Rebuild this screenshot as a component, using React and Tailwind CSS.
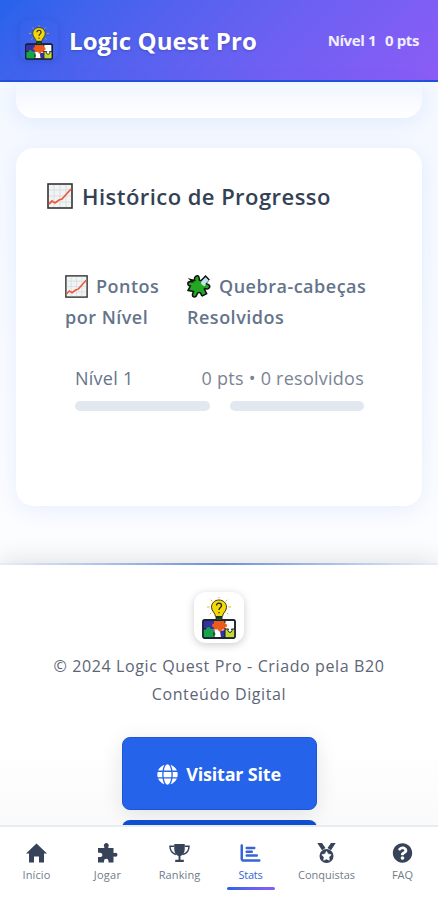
import { FaGlobe, FaQuestionCircle } from 'react-icons/fa'
import { FaChartBar } from 'react-icons/fa6'

/** Light bulb standing on a row of puzzle pieces. */
const Logo = ({ className }) => (
  <svg className={className} viewBox="0 0 34 42" fill="none">
    {/* Rays */}
    <path
      d="M17 0v1M9 3l1 1M25 3l-1 1M5.500 10h1.500M28.500 10H27M8 17l1-1M26 17l-1-1"
      stroke="#eab308" strokeWidth="1" strokeLinecap="round"
    />
    {/* Pieces */}
    <rect x="1" y="23" width="32" height="18" rx="1.500" fill="#fff" stroke="#111827" strokeWidth="1.500" />
    <path d="M1.500 23.500h11v9h-11z" fill="#3730a3" />
    <path d="M1.500 32h3a2 2 0 1 1 4 0h3v3a2 2 0 1 1 0 4v1.500h-10z" fill="#16a34a" />
    <path d="M18 34l5-1v7.500h-4z" fill="#3730a3" />
    <path d="M23 32h3.500a2 2 0 1 0 3 0h3v8.500H23z" fill="#c4d92e" />
    <path d="M12 23.500h11v3a2 2 0 1 1 0 4v2h-3a2 2 0 1 1-4 0h-4v-2a2 2 0 1 1 0-4z" fill="#ea5b1c" />
    <path d="M12 33v8M23 23v3M23 31v10M23 32h3.500a2 2 0 1 0 3 0H33M1 32h3" stroke="#111827" strokeWidth="1" />
    <rect x="1" y="23" width="32" height="18" rx="1.500" stroke="#111827" strokeWidth="1.300" />
    {/* Bulb */}
    <path
      d="M17 3c-4.300 0-7.500 3.200-7.500 7.200 0 4.200 4 5.800 4 9.300h7c0-3.500 4-5.100 4-9.300C24.500 6.200 21.300 3 17 3z"
      fill="#f2d90c" stroke="#3f3a12" strokeWidth="1"
    />
    <path d="M14 20h6v3.500h-6z" fill="#14532d" stroke="#111827" strokeWidth=".8" />
    <path d="M14.500 8.500c0-3.200 5-3 5 0 0 2-2.500 2-2.500 4.500M17 15v1.300" stroke="#292524" strokeWidth="1.300" />
  </svg>
)

const ChartIcon = ({ className }) => (
  <svg className={className} viewBox="0 0 26 26" fill="none">
    <rect x="1" y="1" width="24" height="24" fill="#f1f3f4" stroke="#333" strokeWidth="1.600" />
    <path d="M7 2v22M13 2v22M19 2v22M2 7h22M2 13h22M2 19h22" stroke="#d5dadd" strokeWidth=".8" />
    <path d="M2 21l3-3 3 2 4-3 3-1 9-10" stroke="#ef5a3c" strokeWidth="1.800" />
  </svg>
)

const GreenPiece = ({ className }) => (
  <svg className={className} viewBox="0 0 22 22">
    <path
      d="M3 5l4 1C6 2 10 0 11 3c1 2-1 3 2 3l4-4 3 3-3 4c3 0 5 2 3 4s-4-1-4 1l2 4-4 2c-2-1 0-3-3-3s-1 4-4 4-2-3-1-5l-5-1 2-4c-3 0-3-4 0-4h2z"
      fill="#22a722" stroke="#111" strokeWidth="1.400"
    />
    <path d="M13 7l4-4 3 3-3 3c1 2-2 3-4 0z" fill="#bfe3ee" />
  </svg>
)

const HomeIcon = ({ className }) => (
  <svg className={className} viewBox="0 0 20 20" fill="currentColor">
    <path d="M10 .5L20.500 10.500H17.500V19.500H12.500V13.500H7.500V19.500H2.500V10.500H-.5z" />
  </svg>
)

const PieceIcon = ({ className }) => (
  <svg className={className} viewBox="0 0 20 20" fill="currentColor">
    <path d="M.5 5H6.800V3.800A2.400 2.400 0 1 1 10.800 3.800V5H16V10H17A2 2 0 1 1 17 13.500H16V19.500H11V18A2.200 2.200 0 1 0 6.500 18V19.500H.5V14H2A2.200 2.200 0 1 0 2 9.800H.5z" />
  </svg>
)

const TrophyIcon = ({ className }) => (
  <svg className={className} viewBox="0 0 22 20" fill="none">
    <path d="M5.500.5h11V6c0 4-2.200 6.500-4.500 7.200V17h3.500v2.500h-9V17H10v-3.800C7.700 12.500 5.500 10 5.500 6z" fill="currentColor" />
    <path d="M5.500 3H1c0 5 2.500 7.500 6.500 8.500M16.500 3H21c0 5-2.500 7.500-6.500 8.500" stroke="currentColor" strokeWidth="1.500" />
  </svg>
)

const MedalIcon = ({ className }) => (
  <svg className={className} viewBox="0 0 20 20" fill="none">
    <path d="M.8 0H5.500L9 5 5.500 7.200zM19.200 0H14.500L11 5l3.500 2.200z" fill="currentColor" />
    <circle cx="10" cy="13" r="7" fill="currentColor" />
    <path d="M10 8.300l1.500 2.700 3.200.7-2.200 2.400.3 3.200-2.800-1.300-2.800 1.300.3-3.200-2.200-2.400 3.200-.7z" fill="#fff" stroke="#fff" strokeWidth=".6" />
  </svg>
)

const NAV = [
  { label: 'Início', icon: HomeIcon, width: 'w-[73px]', text: 'tracking-[0.1px]' },
  { label: 'Jogar', icon: PieceIcon, width: 'w-[69px]', text: 'tracking-[0.3px]' },
  { label: 'Ranking', icon: TrophyIcon, width: 'w-[75px]', text: 'tracking-[0.1px]' },
  { label: 'Stats', icon: FaChartBar, width: 'w-[67px]', text: 'tracking-[-0.2px]', active: true },
  { label: 'Conquistas', icon: MedalIcon, width: 'w-[85px]', text: '' },
  { label: 'FAQ', icon: FaQuestionCircle, width: 'w-[67px]', text: '' },
]

const Header = () => (
  <header className="flex h-[82px] shrink-0 items-center border-b-2 border-[#2450d8] bg-linear-135 from-[#2563eb] to-[#8b5cf6] pl-5 pr-[19px] text-white">
    <div className="flex h-[40px] w-[38px] items-center justify-center rounded-lg pt-1 shadow-[0_2px_7px_rgba(30,50,150,0.25)]">
      <Logo className="h-[35px] w-[28px]" />
    </div>
    <h1 className="ml-[11px] mt-[2px] whitespace-nowrap text-[24px] font-bold tracking-[0.1px] [text-shadow:0_1px_3px_rgba(0,0,0,0.2)]">Logic Quest Pro</h1>
    <div className="ml-auto flex gap-[9px] whitespace-nowrap text-[15px] font-bold tracking-[-0.4px] text-[#f1effe]">
      <span>Nível 1</span>
      <span>0 pts</span>
    </div>
  </header>
)

const ProgressCard = () => (
  <section className="mt-[30px] h-[358px] rounded-[18px] bg-white px-[31px] pt-[30px] shadow-[0_4px_22px_rgba(37,99,235,0.09)]">
    <h2 className="flex h-[36px] items-center whitespace-nowrap text-[22px] font-semibold text-[#334155]">
      <ChartIcon className="mr-[9px] size-[26px]" />
      <span className="tracking-[0.45px]">Histórico de Progresso</span>
    </h2>
    <div className="mt-[57px] flex pl-[18px] text-[18px] font-semibold leading-[30.500px] tracking-[0.5px] text-[#64748b]">
      <h3 className="w-[122px] whitespace-nowrap">
        <span className="flex items-center">
          <ChartIcon className="mr-2 size-[23px]" />
          Pontos
        </span>
        por Nível
      </h3>
      <h3 className="whitespace-nowrap">
        <span className="flex items-center">
          <GreenPiece className="mr-2 size-6" />
          Quebra-cabeças
        </span>
        Resolvidos
      </h3>
    </div>
    <div className="mt-[32px] pl-7 pr-[27px]">
      <div className="flex h-[28px] items-center justify-between whitespace-nowrap text-[18px] tracking-[0.25px] text-[#7b8494]">
        <span className="font-medium text-[#64748b]">Nível 1</span>
        <span>0 pts • 0 resolvidos</span>
      </div>
      <div className="mt-[9px] flex gap-5">
        <div className="h-[10px] flex-1 rounded-full bg-[#e2e8f0]" />
        <div className="h-[10px] flex-1 rounded-full bg-[#e2e8f0]" />
      </div>
    </div>
  </section>
)

const Footer = () => (
  <footer className="flex h-[262px] shrink-0 flex-col items-center overflow-hidden bg-linear-to-b from-white from-70% to-[#fafafb] shadow-[0_-4px_22px_rgba(0,0,0,0.1)]">
    <div className="h-[2px] w-full shrink-0 bg-linear-to-r from-[#e8edf8] via-[#6d8fd8] to-[#e8edf8]" />
    <div className="mt-[27px] flex h-[51px] w-[50px] shrink-0 items-center justify-center rounded-xl bg-white shadow-[0_2px_9px_rgba(0,0,0,0.2)]">
      <Logo className="h-[42px] w-[34px]" />
    </div>
    <p className="mt-[9px] shrink-0 whitespace-nowrap text-center text-[16px] font-medium leading-[28px] tracking-[0.62px] text-[#5c6575]">
      © 2024 Logic Quest Pro - Criado pela B20
      <br />
      Conteúdo Digital
    </p>
    <a className="mt-[29px] flex h-[73px] w-[195px] shrink-0 items-center justify-center gap-[8px] rounded-lg border border-[#1d55d4] bg-[#2563eb] pt-[2px] text-[18px] font-bold tracking-[-0.2px] text-white shadow-[0_4px_22px_rgba(0,0,0,0.1)]">
      <FaGlobe className="size-[21px]" />
      <span className="whitespace-nowrap">Visitar Site</span>
    </a>
    <div className="mt-[10px] h-[74px] w-[195px] shrink-0 rounded-lg bg-[#0d4fd0]" />
  </footer>
)

const BottomNav = () => (
  <nav className="relative flex h-[75px] shrink-0 border-t-2 border-[#e7ecf0] bg-white">
    {NAV.map(({ label, icon: Icon, width, text, active }) => (
      <a
        key={label}
        className={`${width} ${active ? 'text-[#3766d4]' : 'text-[#364358]'} flex flex-col items-center pt-[16px]`}
      >
        <Icon className="h-5 w-[21px]" />
        <span className={`${text} ${active ? '' : 'text-[#727b89]'} mt-[4px] whitespace-nowrap text-[11px] leading-4`}>{label}</span>
        {active && <span className="mt-[4px] h-[3px] w-[48px] rounded-full bg-linear-to-r from-[#2563eb] to-[#8b5cf6]" />}
      </a>
    ))}
  </nav>
)

export default function App() {
  return (
    <div className="flex h-[900px] w-full flex-col overflow-hidden bg-white font-['Open_Sans',sans-serif]">
      <Header />
      <main className="h-[481px] shrink-0 bg-linear-to-b from-[#f4f8ff] to-[#fcfdff] px-4">
        <div className="h-[36px] rounded-b-[18px] bg-linear-to-b from-[#eff5ff] to-white shadow-[0_4px_22px_rgba(37,99,235,0.09)]" />
        <ProgressCard />
      </main>
      <Footer />
      <BottomNav />
    </div>
  )
}
